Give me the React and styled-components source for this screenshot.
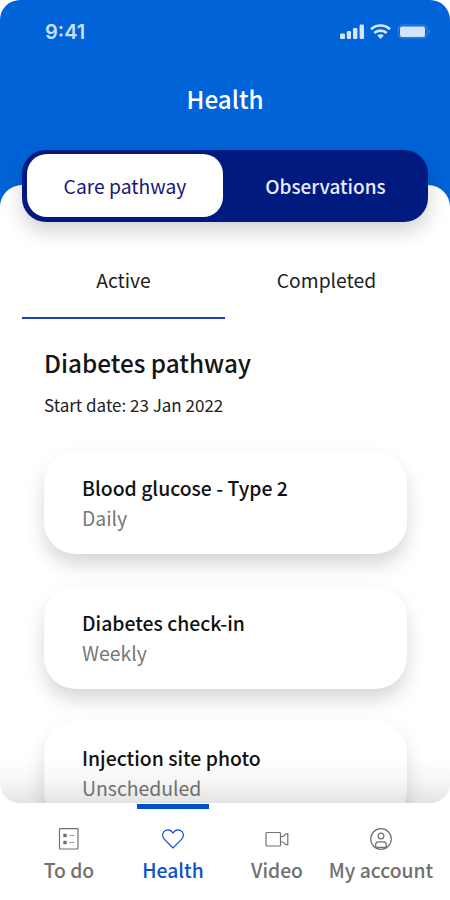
import styled, { createGlobalStyle } from 'styled-components';

const tasks = [
  { title: 'Blood glucose - Type 2', schedule: 'Daily' },
  { title: 'Diabetes check-in', schedule: 'Weekly' },
  { title: 'Injection site photo', schedule: 'Unscheduled' },
];

export default function App() {
  return (
    <Phone>
      <GlobalStyle />
      <Screen>
        <StatusBar>
          <Clock>9:41</Clock>
          <StatusIcons />
        </StatusBar>
        <Title>Health</Title>
        <Sheet>
          <Switcher>
            <SwitchItem $active>Care pathway</SwitchItem>
            <SwitchItem>Observations</SwitchItem>
          </Switcher>
          <Tabs>
            <Tab $active>Active</Tab>
            <Tab>Completed</Tab>
          </Tabs>
          <Pathway>
            <h2>Diabetes pathway</h2>
            <p>Start date: 23 Jan 2022</p>
            <Cards>
              {tasks.map((task) => (
                <Card key={task.title}>
                  <h3>{task.title}</h3>
                  <span>{task.schedule}</span>
                </Card>
              ))}
            </Cards>
          </Pathway>
        </Sheet>
      </Screen>
      <BottomNav>
        <NavItem><TodoIcon />To do</NavItem>
        <NavItem $active><HeartIcon />Health</NavItem>
        <NavItem><VideoIcon />Video</NavItem>
        <NavItem><AccountIcon />My account</NavItem>
      </BottomNav>
    </Phone>
  );
}

function StatusIcons() {
  return (
    <svg width="92" height="18" viewBox="0 0 92 18" fill="#d3e5fb">
      <rect x="0" y="10.5" width="5" height="5.5" rx="1.3" />
      <rect x="6.8" y="8" width="4.2" height="8" rx="1.3" />
      <rect x="13" y="5" width="4.4" height="11" rx="1.3" />
      <rect x="19.6" y="1.5" width="4.4" height="14.5" rx="1.3" />
      <g fill="none" stroke="#d3e5fb" strokeWidth="2.7">
        <path d="M31 6.2a14 14 0 0 1 19 0" />
        <path d="M34.3 10.1a9 9 0 0 1 12.4 0" />
      </g>
      <path d="M37.2 12.6a5 5 0 0 1 6.6 0L40.5 16Z" />
      <rect x="58.4" y="2" width="28.6" height="13" rx="4" fill="none" stroke="#3f88e3" />
      <rect x="60" y="3.5" width="25" height="10.5" rx="2" />
      <path d="M88.5 6.5v4c2-.8 2-3.2 0-4Z" fill="#3f88e3" />
    </svg>
  );
}

function TodoIcon() {
  return (
    <Icon viewBox="0 0 24 24">
      <rect x="2.5" y="1.7" width="18.5" height="20.3" rx="0.5" />
      <rect x="6.9" y="7.4" width="2.2" height="2.2" fill="currentColor" />
      <rect x="6.9" y="14.4" width="2.2" height="2.2" fill="currentColor" />
      <path d="M12.3 8.5h5M12.3 15.5h5" opacity="0.7" />
    </Icon>
  );
}

function HeartIcon() {
  return (
    <Icon viewBox="0 0 24 24">
      <path d="M12 21 3.3 12.1C.5 9.2 1.4 5 4.4 3.5c2.7-1.3 5.6-.4 7.6 2.5 2-2.9 4.9-3.8 7.6-2.5 3 1.5 3.9 5.7 1.1 8.6Z" />
    </Icon>
  );
}

function VideoIcon() {
  return (
    <Icon viewBox="0 0 24 24">
      <rect x="1" y="5.5" width="14.5" height="13.5" rx="1" />
      <path d="M15.5 9.5h2.3c1.7 0 1.5-2.7 3.4-2.7h1.6v10.9h-1.6c-1.9 0-1.7-2.7-3.4-2.7h-2.3" />
    </Icon>
  );
}

function AccountIcon() {
  return (
    <Icon viewBox="0 0 24 24">
      <circle cx="12" cy="12" r="10.3" />
      <circle cx="12" cy="9" r="2.9" />
      <path d="M6.7 20.3v-2.7c0-1.8 1-2.8 2.8-2.8h5c1.8 0 2.8 1 2.8 2.8v2.7Z" />
    </Icon>
  );
}

const GlobalStyle = createGlobalStyle`
  * {
    box-sizing: border-box;
  }

  body {
    margin: 0;
    background: #fff;
    font-family: "Noto Sans CJK JP", "Noto Sans CJK SC", sans-serif;
  }
`;

const Phone = styled.div`
  width: 450px;
  height: 900px;
  overflow: hidden;
  background: #fff;
`;

const Screen = styled.div`
  position: relative;
  height: 803px;
  overflow: hidden;
  border-radius: 20px;
  background: linear-gradient(#0063d8 210px, #fff 210px);

  /* fade above the bottom nav */
  &::after {
    content: '';
    position: absolute;
    inset: auto 0 0;
    height: 46px;
    background: linear-gradient(rgba(0, 0, 0, 0), rgba(0, 0, 0, 0.03) 50%, rgba(0, 0, 0, 0.11));
  }
`;

const StatusBar = styled.div`
  display: flex;
  justify-content: space-between;
  align-items: center;
  height: 64px;
  padding: 0 18px 0 45px;
`;

const Clock = styled.span`
  font: 600 20px/24px Inter, sans-serif;
  color: #c9dffa;
`;

const Title = styled.h1`
  margin: 16px 0 0;
  height: 105px;
  font-size: 24.2px;
  font-weight: 500;
  line-height: 38px;
  text-align: center;
  color: #fff;
`;

const Sheet = styled.main`
  height: 618px;
  border-radius: 22px 22px 0 0;
  background: #fff;
  padding: 0 22px;
`;

const Switcher = styled.div`
  position: relative;
  top: -35px;
  display: flex;
  height: 72px;
  padding: 4px 0 5px 5px;
  border-radius: 24px;
  background: #001a80;
  box-shadow: 0 9px 20px rgba(0, 0, 0, 0.18);
`;

const SwitchItem = styled.div`
  flex: ${({ $active }) => ($active ? '0 0 196px' : 1)};
  display: flex;
  align-items: center;
  justify-content: center;
  border-radius: 20px;
  font-size: ${({ $active }) => ($active ? '19.3px' : '19px')};
  font-weight: ${({ $active }) => ($active ? 400 : 500)};
  line-height: 28px;
  color: ${({ $active }) => ($active ? '#17177d' : '#e9ecff')};
  background: ${({ $active }) => ($active ? '#fff' : 'none')};
`;

const Tabs = styled.div`
  display: flex;
  margin-top: -12px;
`;

const Tab = styled.div`
  flex: 1;
  height: 74px;
  padding-top: 20px;
  font-size: 19.3px;
  line-height: 30px;
  text-align: center;
  color: #222;
  border-bottom: 2px solid ${({ $active }) => ($active ? '#1d3fc0' : 'transparent')};
`;

const Pathway = styled.section`
  padding: 25px 22px 0;

  h2 {
    margin: 0;
    font-size: 24.3px;
    font-weight: 500;
    line-height: 38px;
    color: #151515;
  }

  p {
    margin: 10px 0 0;
    font-size: 17px;
    line-height: 26px;
    color: #222;
  }
`;

const Cards = styled.div`
  display: flex;
  flex-direction: column;
  gap: 32px;
  width: 363px;
  margin-top: 33px;
`;

const Card = styled.article`
  flex: none;
  height: 103px;
  padding: 22px 38px;
  border-radius: 32px;
  background: #fff;
  box-shadow: 0 11px 20px -1px rgba(0, 0, 0, 0.17);
  font-size: 19.4px;
  line-height: 30px;
  color: #777;

  h3 {
    margin: 0;
    font-size: 19.4px;
    font-weight: 500;
    color: #111;
  }
`;

const BottomNav = styled.nav`
  display: flex;
  height: 97px;
  padding: 0 17px;
`;

const NavItem = styled.div`
  flex: 1 0 0;
  min-width: 0;
  display: flex;
  flex-direction: column;
  align-items: center;
  gap: 4px;
  font-size: 19.3px;
  font-weight: 500;
  line-height: 30px;
  white-space: nowrap;
  color: ${({ $active }) => ($active ? '#0b50cc' : '#707070')};

  &::before {
    content: '';
    width: 72px;
    height: 5px;
    margin: 1px 0 14px;
    background: ${({ $active }) => ($active ? '#0053cc' : 'none')};
  }
`;

const Icon = styled.svg`
  flex: none;
  width: 24px;
  height: 24px;
  fill: none;
  stroke: currentColor;
  stroke-width: 1.2;
`;
